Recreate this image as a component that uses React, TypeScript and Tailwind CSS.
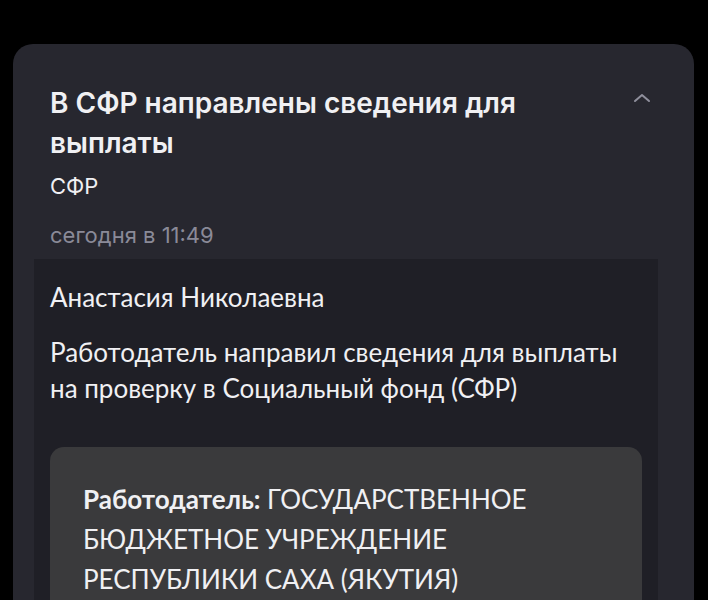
export default function App() {
  return (
    <div className="w-[708px] h-[600px] bg-black overflow-hidden pt-[44px] pl-[13px] pr-[14px]">
      <div className="bg-[#27272f] rounded-[20px] h-[600px] pl-[21px] pr-[36px] pt-[39px]">
        <div className="flex items-start justify-between pl-[16px]" style={{ fontFamily: "Inter, sans-serif" }}>
          <div className="text-[28px] leading-[40px] font-semibold text-[#f0f0f3] w-[540px]">
            В СФР направлены сведения для выплаты
          </div>
          <svg width="20" height="12" viewBox="0 0 20 12" className="mt-[9px] mr-[6px]">
            <path d="M3 9 L10 3 L17 9" stroke="#8f8f9c" strokeWidth="2" fill="none" strokeLinecap="round" strokeLinejoin="round" />
          </svg>
        </div>
        <div className="pl-[16px] mt-[8px] text-[22px] leading-[30px] text-[#f0f0f3]" style={{ fontFamily: "Inter, sans-serif" }}>
          СФР
        </div>
        <div className="pl-[16px] mt-[19px] text-[22px] leading-[30px] text-[#8a8a98]" style={{ fontFamily: "Inter, sans-serif" }}>
          сегодня в 11:49
        </div>
        <div className="mt-[9px] bg-[#1f1f26] pl-[16px] pr-[16px] pt-[20px] h-[400px]" style={{ fontFamily: "Lato, sans-serif" }}>
          <div className="text-[26px] leading-[36px] text-[#f0f0f3]">Анастасия Николаевна</div>
          <div className="mt-[19px] text-[26px] leading-[36px] text-[#f0f0f3]">
            Работодатель направил сведения для выплаты на проверку в Социальный фонд (СФР)
          </div>
          <div className="mt-[41px] bg-[#3a3a3c] rounded-[14px] pl-[33px] pr-[33px] pt-[32px] pb-[20px]">
            <div className="text-[26px] leading-[40px] text-[#f0f0f3]">
              <span className="font-bold">Работодатель:</span> ГОСУДАРСТВЕННОЕ БЮДЖЕТНОЕ УЧРЕЖДЕНИЕ РЕСПУБЛИКИ САХА (ЯКУТИЯ)
            </div>
          </div>
        </div>
      </div>
    </div>
  );
}
